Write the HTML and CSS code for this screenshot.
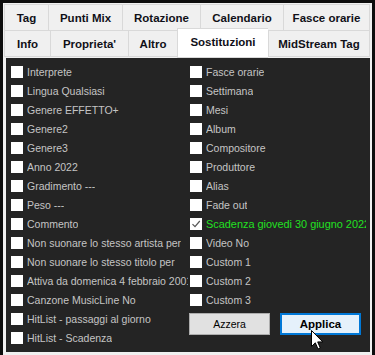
FILE: index.html
```html
<!DOCTYPE html>
<html>
<head>
<meta charset="utf-8">
<link rel="stylesheet" href="styles.css">
</head>
<body>
<div class="window">
  <div class="tabs">
    <div class="tabrow row1">
      <div class="tab">Tag</div>
      <div class="tab">Punti Mix</div>
      <div class="tab">Rotazione</div>
      <div class="tab">Calendario</div>
      <div class="tab">Fasce orarie</div>
    </div>
    <div class="tabrow row2">
      <div class="tab">Info</div>
      <div class="tab">Proprieta'</div>
      <div class="tab">Altro</div>
      <div class="tab active">Sostituzioni</div>
      <div class="tab">MidStream Tag</div>
    </div>
  </div>
  <div class="panel">
    <div class="col left">
      <div class="row"><span class="box"></span><span class="lbl">Interprete</span></div>
      <div class="row"><span class="box"></span><span class="lbl">Lingua Qualsiasi</span></div>
      <div class="row"><span class="box"></span><span class="lbl">Genere EFFETTO+</span></div>
      <div class="row"><span class="box"></span><span class="lbl">Genere2</span></div>
      <div class="row"><span class="box"></span><span class="lbl">Genere3</span></div>
      <div class="row"><span class="box"></span><span class="lbl">Anno 2022</span></div>
      <div class="row"><span class="box"></span><span class="lbl">Gradimento ---</span></div>
      <div class="row"><span class="box"></span><span class="lbl">Peso ---</span></div>
      <div class="row"><span class="box"></span><span class="lbl">Commento</span></div>
      <div class="row"><span class="box"></span><span class="lbl">Non suonare lo stesso artista per</span></div>
      <div class="row"><span class="box"></span><span class="lbl">Non suonare lo stesso titolo per</span></div>
      <div class="row"><span class="box"></span><span class="lbl">Attiva da domenica 4 febbraio 2001</span></div>
      <div class="row"><span class="box"></span><span class="lbl">Canzone MusicLine No</span></div>
      <div class="row"><span class="box"></span><span class="lbl">HitList - passaggi al giorno</span></div>
      <div class="row"><span class="box"></span><span class="lbl">HitList - Scadenza</span></div>
    </div>
    <div class="col right">
      <div class="row"><span class="box"></span><span class="lbl">Fasce orarie</span></div>
      <div class="row"><span class="box"></span><span class="lbl">Settimana</span></div>
      <div class="row"><span class="box"></span><span class="lbl">Mesi</span></div>
      <div class="row"><span class="box"></span><span class="lbl">Album</span></div>
      <div class="row"><span class="box"></span><span class="lbl">Compositore</span></div>
      <div class="row"><span class="box"></span><span class="lbl">Produttore</span></div>
      <div class="row"><span class="box"></span><span class="lbl">Alias</span></div>
      <div class="row"><span class="box"></span><span class="lbl">Fade out</span></div>
      <div class="row"><span class="box checked"><svg width="12" height="12" viewBox="0 0 12 12"><path d="M2.5 6.2 L5 8.7 L9.8 3" fill="none" stroke="#555" stroke-width="1.2"/></svg></span><span class="lbl green">Scadenza giovedi 30 giugno 2022</span></div>
      <div class="row"><span class="box"></span><span class="lbl">Video No</span></div>
      <div class="row"><span class="box"></span><span class="lbl">Custom 1</span></div>
      <div class="row"><span class="box"></span><span class="lbl">Custom 2</span></div>
      <div class="row"><span class="box"></span><span class="lbl">Custom 3</span></div>
      <div class="buttons">
        <button class="btn">Azzera</button>
        <button class="btn primary">Applica</button>
      </div>
    </div>
    <svg class="cursor" width="13" height="20" viewBox="0 0 13 20"><path d="M0.5 0.5 L0.5 16.5 L4.3 12.8 L7 19 L9.3 18 L6.7 11.9 L11.8 11.9 Z" fill="#fff" stroke="#000" stroke-width="1"/></svg>
  </div>
</div>
</body>
</html>
```
FILE: styles.css
```css
* { box-sizing: border-box; }
html, body { margin: 0; padding: 0; }
body {
  background: #0d0d0d;
  width: 375px;
  height: 355px;
  overflow: hidden;
  font-family: "Liberation Sans", Arial, sans-serif;
}
.window {
  margin: 3px 3px 0 3px;
  height: 352px;
  background: #f0f0f0;
  padding: 1px 0 0 1px;
  display: flex;
  flex-direction: column;
}
.tabs {
  display: flex;
  flex-direction: column;
}
.tabrow {
  display: grid;
  height: 26px;
}
.row1 { grid-template-columns: 44px 74px 78px 83px 87px; }
.row2 { grid-template-columns: 46px 78px 49px 91px 102px; height: 27px; }
.tab {
  border: 1px solid #d9d9d9;
  border-right: none;
  background: #f0f0f0;
  font-weight: bold;
  font-size: 11.5px;
  color: #101018;
  display: flex;
  align-items: center;
  justify-content: center;
  padding-top: 1px;
}
.tab:last-child { border-right: 1px solid #d9d9d9; }
.row1 .tab { border-bottom: none; }
.tab.active {
  background: #fff;
  margin-top: -2px;
  margin-bottom: -1px;
  border-color: #d9d9d9;
  position: relative;
  z-index: 2;
  padding-top: 0;
  padding-bottom: 2px;
}
.panel {
  position: relative;
  margin: 1px 2px 0 2px;
  flex: 1;
  margin-bottom: 3px;
  background: #242424;
  display: grid;
  grid-template-columns: 179px 1fr;
  padding: 4px 0 0 5px;
}
.col { display: flex; flex-direction: column; min-width: 0; }
.row {
  height: 19px;
  display: flex;
  align-items: center;
  gap: 4px;
  min-width: 0;
}
.box {
  flex: 0 0 12px;
  width: 12px;
  height: 12px;
  background: #fff;
  display: block;
}
.box svg { display: block; }
.lbl {
  font-size: 10.5px;
  color: #c4c4c4;
  white-space: nowrap;
  overflow: hidden;
  min-width: 0;
  padding-top: 1px;
}
.left .lbl { max-width: 161px; }
.right .lbl { max-width: 160px; }
.lbl.green { color: #22e022; font-size: 10.9px; }
.buttons {
  display: flex;
  gap: 10px;
  margin-top: 4px;
  margin-left: -1px;
}
.btn {
  width: 81px;
  height: 22px;
  font-family: "Liberation Sans", Arial, sans-serif;
  font-size: 10.5px;
  color: #000;
  background: #e1e1e1;
  border: 1px solid #adadad;
  padding: 0;
  margin: 0;
}
.btn.primary {
  background: #e5f1fb;
  border: 2px solid #0078d7;
  font-weight: bold;
  font-size: 11.5px;
}
.cursor {
  position: absolute;
  left: 305px;
  top: 272px;
}
```
